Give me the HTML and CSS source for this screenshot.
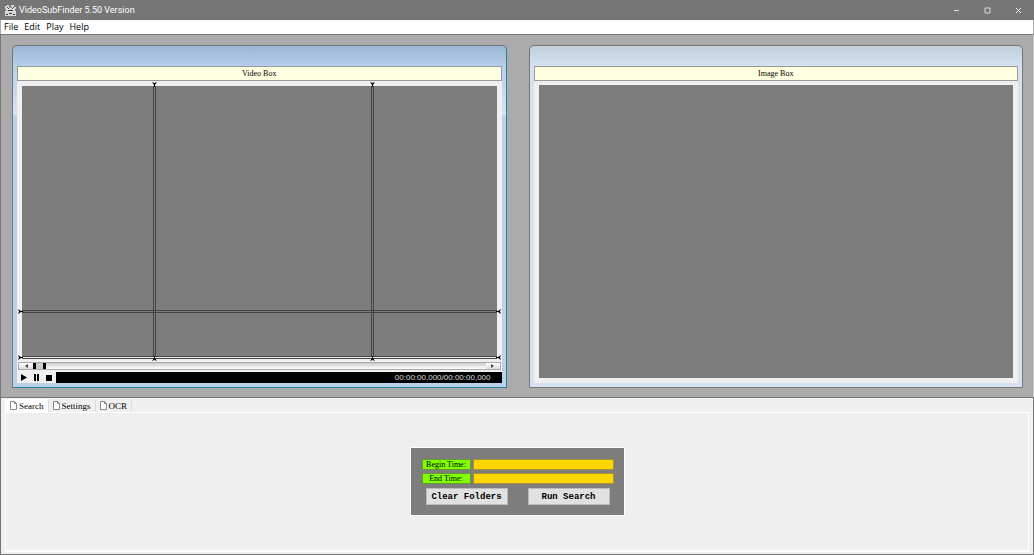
FILE: index.html
```
<!DOCTYPE html>
<html lang="en">
<head>
    <meta charset="UTF-8">
    <meta name="viewport" content="width=device-width, initial-scale=1.0">
    <title>VideoSubFinder 5.50 Version</title>
    <link rel="stylesheet" href="styles.css">
</head>
<body>
    <header class="titlebar">
        <svg class="logo" width="11" height="11" viewBox="0 0 11 11">
            <rect width="11" height="11" fill="#d8d8d8"/>
            <path d="M0 0h2v1H0zM4 0h2v1H4zM9 0h2v2H9zM0 4h1v2H0zM10 4h1v2h-1z" fill="#777"/>
            <path d="M2 2l2 2M9 2L7 4M4 2h3" stroke="#555" fill="none"/>
            <path d="M3 5h5v1H3zM1 9h2v1H1zM4 8h3v1H4zM8 9h2v1H8z" fill="#333"/>
        </svg>
        <h1>VideoSubFinder 5.50 Version</h1>
        <div class="window-buttons">
            <button aria-label="Minimize"><svg width="7" height="7" viewBox="0 0 7 7"><path d="M1 3.5h5" stroke="#ddd"/></svg></button>
            <button aria-label="Maximize"><svg width="7" height="7" viewBox="0 0 7 7"><path d="M1 1h5v5H1z" stroke="#ddd" fill="none"/></svg></button>
            <button aria-label="Close"><svg width="7" height="7" viewBox="0 0 7 7"><path d="M1 1l5 5M6 1L1 6" stroke="#eee"/></svg></button>
        </div>
    </header>
    <nav class="menu">
        <a href="#">File</a>
        <a href="#">Edit</a>
        <a href="#">Play</a>
        <a href="#">Help</a>
    </nav>

    <main class="workspace">
        <section class="child active">
            <h2>Video Box</h2>
            <div class="screen">
                <div class="line across line-top"></div>
                <div class="line across line-bottom"></div>
                <div class="line down line-left"></div>
                <div class="line down line-right"></div>
                <svg class="tip tip-w line-top" viewBox="0 0 5 5"><path d="M0 0l3 2h2v1H3L0 5l1-2.500z"/></svg>
                <svg class="tip tip-w line-bottom" viewBox="0 0 5 5"><path d="M0 0l3 2h2v1H3L0 5l1-2.500z"/></svg>
                <svg class="tip tip-e line-top" viewBox="0 0 5 5"><path d="M5 0L2 2H0v1h2l3 2-1-2.500z"/></svg>
                <svg class="tip tip-e line-bottom" viewBox="0 0 5 5"><path d="M5 0L2 2H0v1h2l3 2-1-2.500z"/></svg>
                <svg class="tip tip-n line-left" viewBox="0 0 5 5"><path d="M0 0l2 3v2h1V3l2-3-2.500 1z"/></svg>
                <svg class="tip tip-n line-right" viewBox="0 0 5 5"><path d="M0 0l2 3v2h1V3l2-3-2.500 1z"/></svg>
                <svg class="tip tip-s line-left" viewBox="0 0 5 5"><path d="M0 5l2-3V0h1v2l2 3-2.500-1z"/></svg>
                <svg class="tip tip-s line-right" viewBox="0 0 5 5"><path d="M0 5l2-3V0h1v2l2 3-2.500-1z"/></svg>
            </div>
            <div class="scrollbar">
                <button class="arrow" aria-label="Back"><svg width="3" height="4" viewBox="0 0 3 4"><path d="M3 0v4L0 2z"/></svg></button>
                <span class="thumb"></span>
                <button class="arrow end" aria-label="Forward"><svg width="3" height="4" viewBox="0 0 3 4"><path d="M0 0v4l3-2z"/></svg></button>
            </div>
            <div class="player">
                <button aria-label="Play"><svg width="7" height="7" viewBox="0 0 7 7"><path d="M1 0v7l6-3.500z"/></svg></button>
                <button aria-label="Pause"><svg width="7" height="7" viewBox="0 0 7 7"><path d="M1 0h2v7H1zM4 0h2v7H4z"/></svg></button>
                <button aria-label="Stop"><svg width="7" height="7" viewBox="0 0 7 7"><path d="M0 1h6v6H0z"/></svg></button>
                <div class="time">00:00:00,000/00:00:00,000</div>
            </div>
        </section>
        <section class="child">
            <h2>Image Box</h2>
            <div class="screen"></div>
        </section>
    </main>

    <section class="bottom">
        <div class="tabs">
            <button class="tab selected"><svg width="7" height="9" viewBox="0 0 7 9"><path d="M.5.5h4l2 2v6h-6zM4.500.5v2h2"/></svg>Search</button>
            <button class="tab"><svg width="7" height="9" viewBox="0 0 7 9"><path d="M.5.5h4l2 2v6h-6zM4.500.5v2h2"/></svg>Settings</button>
            <button class="tab"><svg width="7" height="9" viewBox="0 0 7 9"><path d="M.5.5h4l2 2v6h-6zM4.500.5v2h2"/></svg>OCR</button>
        </div>
        <div class="page">
            <form class="search">
                <label for="begin">Begin Time:</label>
                <input type="text" id="begin">
                <label for="end">End Time:</label>
                <input type="text" id="end">
                <div class="actions">
                    <button type="button">Clear Folders</button>
                    <button type="button">Run Search</button>
                </div>
            </form>
        </div>
    </section>
</body>
</html>
```

FILE: styles.css
```
* {
    box-sizing: border-box;
}
body {
    margin: 0;
    min-height: 100vh;
    display: flex;
    flex-direction: column;
    background: #ababab;
    font-family: 'Liberation Serif', serif;
    font-size: 8px;
    color: #000;
}
button {
    border: none;
    padding: 0;
    background: none;
    font-family: inherit;
    color: inherit;
}
svg {
    display: block;
}
h1, h2 {
    margin: 0;
    font-weight: normal;
}

/* title and menu */
.titlebar {
    height: 20px;
    display: flex;
    align-items: center;
    padding-left: 5px;
    background: #767676;
    color: #fff;
}
.titlebar h1 {
    flex: 1;
    margin-left: 3px;
    font: 9px Roboto, sans-serif;
}
.window-buttons {
    display: flex;
}
.window-buttons button {
    width: 31px;
    height: 20px;
    display: flex;
    align-items: center;
    justify-content: center;
}
.menu {
    height: 14px;
    display: flex;
    gap: 6px;
    padding-left: 3px;
    margin: 0 1px;
    background: #fff;
    font: 9px/14px 'Open Sans', sans-serif;
}
.menu a {
    color: #000;
    text-decoration: none;
}

/* child windows */
.workspace {
    flex: 1;
    display: grid;
    grid-template-columns: 1fr 1fr;
    gap: 22px;
    padding: 10px 10px 9px 11px;
    border: 1px solid #777;
    border-bottom: none;
    border-right-color: #ccc;
}
.child {
    display: flex;
    flex-direction: column;
    padding: 20px 4px 4px;
    border: 1px solid #777;
    border-radius: 5px 5px 0 0;
    background: linear-gradient(#c1cedc, #d4e2f1 20px);
}
.child.active {
    border-right-color: #2f7e96;
    border-bottom-color: #2f7e96;
    background: linear-gradient(#9bb6d3, #b5cfeb 20px, #d5e5f6 68px, #b9d1ea 70px);
}
.child h2 {
    height: 15px;
    border: 1px solid #999;
    background: #ffffe1;
    font-size: 8px;
    line-height: 13px;
    text-align: center;
}
.screen {
    position: relative;
    flex: 1;
    border: 5px solid #f0f0f0;
    border-top-width: 4px;
    background: #7d7d7d;
}
.active .screen {
    border-top-width: 5px;
}

/* crop lines over the video */
.line {
    position: absolute;
}
.across {
    left: 0;
    right: 0;
    height: 3px;
    margin-top: -1px;
    border: solid #444;
    border-width: 1px 0;
}
.down {
    top: 0;
    bottom: 0;
    width: 3px;
    margin-left: -2px;
    border: solid #444;
    border-width: 0 1px;
}
.line-top {
    top: 83%;
}
.line-bottom {
    top: 100%;
}
.line-left {
    left: 28%;
}
.line-right {
    left: 74%;
}
.tip {
    position: absolute;
    width: 5px;
    height: 5px;
    fill: #000;
}
.tip-w {
    left: -4px;
    margin-top: -2px;
}
.tip-e {
    right: -4px;
    margin-top: -2px;
}
.tip-n {
    top: -4px;
    margin-left: -3px;
}
.tip-s {
    bottom: -4px;
    margin-left: -3px;
}

.scrollbar {
    display: flex;
    height: 8px;
    border: 1px solid #aaa;
    background: linear-gradient(#ccc, #fff);
    box-shadow: 0 0 0 1px #f0f0f0;
    margin: 0 1px;
}
.arrow {
    width: 14px;
    display: flex;
    align-items: center;
    justify-content: center;
    background: linear-gradient(#fff, #ddd);
}
.arrow svg {
    fill: #444;
}
.thumb {
    width: 13px;
    border: solid #000;
    border-width: 0 3px;
    background: #ccc;
}
.end {
    margin-left: auto;
}
.player {
    display: flex;
    height: 13px;
    padding-top: 2px;
    background: #f0f0f0;
}
.player button {
    width: 13px;
    display: flex;
    align-items: center;
    justify-content: center;
}
.time {
    flex: 1;
    padding-right: 11px;
    background: #000;
    color: #ddd;
    font: 8px/11px 'Liberation Sans', sans-serif;
    text-align: right;
}

/* bottom tabs */
.bottom {
    height: 158px;
    display: flex;
    flex-direction: column;
    padding: 1px 4px 2px;
    border: 1px solid #777;
    background: #f0f0f0;
}
.tabs {
    display: flex;
    height: 13px;
}
.tab {
    display: flex;
    align-items: center;
    gap: 2px;
    padding: 0 4px;
    border-right: 1px solid #ddd;
    font-size: 9px;
}
.tab svg {
    fill: #fff;
    stroke: #888;
}
.selected {
    padding-left: 5px;
    background: #fff;
}
.page {
    flex: 1;
    display: flex;
    align-items: center;
    justify-content: center;
    border: 1px solid #fff;
    border-bottom-width: 2px;
    background: #efefef;
}
.search {
    display: grid;
    grid-template-columns: 49px 141px;
    gap: 3px 2px;
    padding: 11px 10px 10px 11px;
    background: #7d7d7d;
    box-shadow: 0 0 0 1px #fff;
}
.search label {
    height: 11px;
    border: 1px solid #669933;
    background: #80ff00;
    line-height: 9px;
    text-align: center;
}
.search input {
    width: 100%;
    height: 11px;
    padding: 0 2px;
    border: 1px solid #a89030;
    background: #ffd700;
    font-size: 8px;
}
.actions {
    grid-column: span 2;
    display: flex;
    justify-content: space-between;
    padding: 1px 4px 0;
}
.actions button {
    width: 82px;
    height: 17px;
    border: 1px solid #bbb;
    background: #e1e1e1;
    font: bold 9px 'Liberation Mono', monospace;
}
```
